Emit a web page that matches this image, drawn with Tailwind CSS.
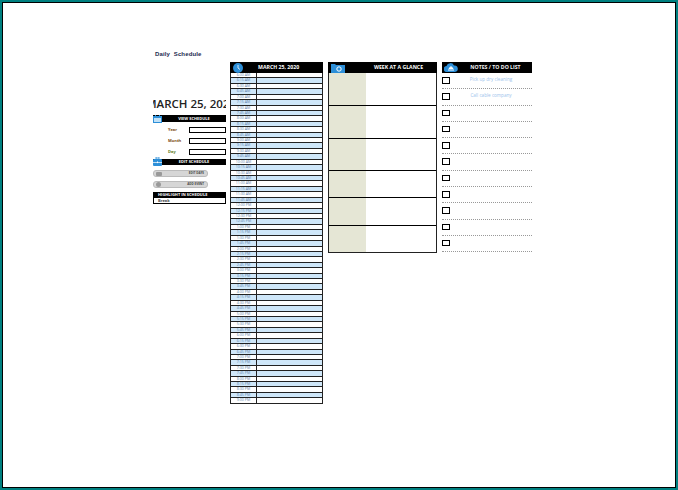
<!DOCTYPE html>
<html><head><meta charset="utf-8"><script src="https://cdn.jsdelivr.net/npm/@tailwindcss/browser@4"></script></head>
<body class="bg-white">
<div class="w-[678px] h-[490px] border-2 border-[#008080] overflow-hidden font-['Open_Sans',sans-serif]">
<div class="w-full h-full border border-black pl-[150px] pt-[47px] flex items-start">

<!-- left column -->
<div class="w-[73px] flex flex-col shrink-0">
  <div class="h-[9px] pl-[2px] text-[6px] leading-[9px] font-bold tracking-[0.15px] text-[#1b2a4f] font-['Liberation_Sans',sans-serif]">Daily &nbsp;Schedule</div>
  <div class="mt-[36px] h-[17px] overflow-hidden flex justify-center pl-[3px] text-[11.5px] leading-[17px] font-semibold text-[#222] whitespace-nowrap">MARCH 25, 2020</div>
  <div class="mt-[3px] h-[7px] bg-black flex items-center">
    <svg class="w-[9px] h-[8px] shrink-0" viewBox="0 0 9 8"><rect y="1" width="9" height="7" fill="#2d8fd8"/><rect x="1" y="3" width="7" height="4" fill="#bfe0f7"/><rect x="2" width="1" height="2" fill="#2d8fd8"/><rect x="6" width="1" height="2" fill="#2d8fd8"/></svg>
    <span class="flex-1 text-center text-[4px] font-bold text-white">VIEW SCHEDULE</span>
  </div>
  <div class="mt-[5px] flex items-center h-[6px]"><span class="w-[36px] pl-[15px] text-[4px] font-bold text-[#7a4a10]">Year</span><div class="flex-1 h-[6px] border border-black"></div></div>
  <div class="mt-[5px] flex items-center h-[6px]"><span class="w-[36px] pl-[15px] text-[4px] font-bold text-[#7a4a10]">Month</span><div class="flex-1 h-[6px] border border-black"></div></div>
  <div class="mt-[5px] flex items-center h-[6px]"><span class="w-[36px] pl-[15px] text-[4px] font-bold text-[#5a7a20]">Day</span><div class="flex-1 h-[6px] border border-black"></div></div>
  <div class="mt-[4px] h-[6px] bg-black flex items-center">
    <svg class="w-[9px] h-[9px] shrink-0 -mt-[2px]" viewBox="0 0 9 9"><rect x="3" y="0" width="3" height="2" fill="none" stroke="#2d8fd8" stroke-width=".8"/><rect y="2" width="9" height="7" rx="1" fill="#2d8fd8"/><rect x="0" y="5" width="9" height=".7" fill="#fff"/><rect x="4" y="4.5" width="1" height="1.6" fill="#fff"/></svg>
    <span class="flex-1 text-center text-[4px] font-bold text-white">EDIT SCHEDULE</span>
  </div>
  <div class="mt-[5px] w-[55px] h-[7px] rounded-[3px] bg-[#d6d6d6] border border-[#bbb] flex items-center pl-[2px]">
    <div class="w-[6px] h-[4px] bg-[#999] rounded-[1px]"></div>
    <span class="flex-1 text-right pr-[3px] text-[3px] font-bold text-[#444]">EDIT DAYS</span>
  </div>
  <div class="mt-[4px] w-[55px] h-[7px] rounded-[3px] bg-[#d6d6d6] border border-[#bbb] flex items-center pl-[2px]">
    <div class="w-[5px] h-[5px] bg-[#999] rounded-full"></div>
    <span class="flex-1 text-right pr-[3px] text-[3px] font-bold text-[#444]">ADD EVENT</span>
  </div>
  <div class="mt-[4px] h-[5px] bg-black pl-[5px] text-[4px] leading-[5px] font-bold text-white">HIGHLIGHT IN SCHEDULE</div>
  <div class="h-[7px] border border-black pl-[4px] text-[4px] leading-[5px] font-bold text-[#444]">Break</div>
</div>

<!-- schedule -->
<div class="ml-[4px] mt-[12px] w-[93px] shrink-0 flex flex-col">
  <div class="h-[11px] bg-black flex items-center">
    <div class="w-[16px] flex justify-center"><svg class="w-[10px] h-[10px]" viewBox="0 0 10 10"><circle cx="5" cy="5" r="5" fill="#2d8fd8"/><path d="M5 2v3l2 1.5" stroke="#fff" stroke-width=".8" fill="none"/></svg></div>
    <span class="ml-[12px] text-[5.2px] font-bold text-white whitespace-nowrap">MARCH 25, 2020</span>
  </div>
  <div class="h-[331px] border-x border-[#222] flex flex-col text-[3.6px] text-[#5f7fa8] leading-[3.6px] [&>div]:flex [&>div]:flex-1 [&>div]:min-h-0 [&>div]:border-b [&>div]:border-[#222] [&>div:nth-child(even)]:bg-[#cfe7f9] [&>div>span]:w-[26px] [&>div>span]:border-r [&>div>span]:border-[#222] [&>div>span]:text-center [&>div>span]:whitespace-nowrap [&>div>span]:overflow-hidden">
    <div><span>6:00 AM</span></div><div><span>6:15 AM</span></div><div><span>6:30 AM</span></div><div><span>6:45 AM</span></div>
    <div><span>7:00 AM</span></div><div><span>7:15 AM</span></div><div><span>7:30 AM</span></div><div><span>7:45 AM</span></div>
    <div><span>8:00 AM</span></div><div><span>8:15 AM</span></div><div><span>8:30 AM</span></div><div><span>8:45 AM</span></div>
    <div><span>9:00 AM</span></div><div><span>9:15 AM</span></div><div><span>9:30 AM</span></div><div><span>9:45 AM</span></div>
    <div><span>10:00 AM</span></div><div><span>10:15 AM</span></div><div><span>10:30 AM</span></div><div><span>10:45 AM</span></div>
    <div><span>11:00 AM</span></div><div><span>11:15 AM</span></div><div><span>11:30 AM</span></div><div><span>11:45 AM</span></div>
    <div><span>12:00 PM</span></div><div><span>12:15 PM</span></div><div><span>12:30 PM</span></div><div><span>12:45 PM</span></div>
    <div><span>1:00 PM</span></div><div><span>1:15 PM</span></div><div><span>1:30 PM</span></div><div><span>1:45 PM</span></div>
    <div><span>2:00 PM</span></div><div><span>2:15 PM</span></div><div><span>2:30 PM</span></div><div><span>2:45 PM</span></div>
    <div><span>3:00 PM</span></div><div><span>3:15 PM</span></div><div><span>3:30 PM</span></div><div><span>3:45 PM</span></div>
    <div><span>4:00 PM</span></div><div><span>4:15 PM</span></div><div><span>4:30 PM</span></div><div><span>4:45 PM</span></div>
    <div><span>5:00 PM</span></div><div><span>5:15 PM</span></div><div><span>5:30 PM</span></div><div><span>5:45 PM</span></div>
    <div><span>6:00 PM</span></div><div><span>6:15 PM</span></div><div><span>6:30 PM</span></div><div><span>6:45 PM</span></div>
    <div><span>7:00 PM</span></div><div><span>7:15 PM</span></div><div><span>7:30 PM</span></div><div><span>7:45 PM</span></div>
    <div><span>8:00 PM</span></div><div><span>8:15 PM</span></div><div><span>8:30 PM</span></div><div><span>8:45 PM</span></div>
    <div><span>9:00 PM</span></div>
  </div>
</div>

<!-- week -->
<div class="ml-[5px] mt-[12px] w-[109px] shrink-0 flex flex-col">
  <div class="h-[11px] bg-black flex items-center">
    <svg class="ml-[3px] w-[14px] h-[10px] shrink-0" viewBox="0 0 14 10"><path d="M0 1h4l1 1h9v8H0z" fill="#2d8fd8"/><circle cx="8" cy="6" r="2.2" fill="none" stroke="#fff" stroke-width="1"/></svg>
    <span class="flex-1 text-center text-[5.2px] font-bold text-white pl-[15px] whitespace-nowrap">WEEK AT A GLANCE</span>
  </div>
  <div class="border-x border-b border-[#222] flex flex-col [&>div]:flex [&>div]:border-b [&>div]:border-black [&>div:last-child]:border-b-0 [&>div>div]:w-[37px] [&>div>div]:bg-[#e5e6d5]">
    <div class="h-[33px]"><div></div></div>
    <div class="h-[33px]"><div></div></div>
    <div class="h-[32px]"><div></div></div>
    <div class="h-[27px]"><div></div></div>
    <div class="h-[28px]"><div></div></div>
    <div class="h-[26px]"><div></div></div>
  </div>
</div>

<!-- notes -->
<div class="ml-[5px] mt-[12px] w-[90px] shrink-0 flex flex-col">
  <div class="h-[11px] bg-black flex items-center">
    <svg class="ml-[2px] w-[14px] h-[10px] shrink-0" viewBox="0 0 14 10"><path d="M3 9a3 3 0 0 1-.5-6A4 4 0 0 1 10 2.5 3.2 3.2 0 0 1 11 9z" fill="#2d8fd8"/><path d="M5 5.5h4L7 3.5zM4 7h6" stroke="#fff" stroke-width="1" fill="#fff"/></svg>
    <span class="flex-1 text-center text-[5.2px] font-bold text-[#f3f3f3] pl-[1px] whitespace-nowrap">NOTES / TO DO LIST</span>
  </div>
  <div class="flex flex-col text-[4.6px] text-[#9cc3ec] [&>div]:h-[16.3px] [&>div]:flex [&>div]:items-start [&>div]:border-b [&>div]:border-dotted [&>div]:border-[#999] [&>div>i]:w-[8px] [&>div>i]:h-[6.5px] [&>div>i]:mt-[4px] [&>div>i]:border [&>div>i]:border-black [&>div>i]:shrink-0 [&>div>span]:flex-1 [&>div>span]:text-center [&>div>span]:pt-[3px]">
    <div><i></i><span>Pick up dry cleaning</span></div>
    <div><i></i><span>Call cable company</span></div>
    <div><i></i></div>
    <div><i></i></div>
    <div><i></i></div>
    <div><i></i></div>
    <div><i></i></div>
    <div><i></i></div>
    <div><i></i></div>
    <div><i></i></div>
    <div class="!h-[16px]"><i></i></div>
  </div>
</div>

</div></div>
</body></html>
